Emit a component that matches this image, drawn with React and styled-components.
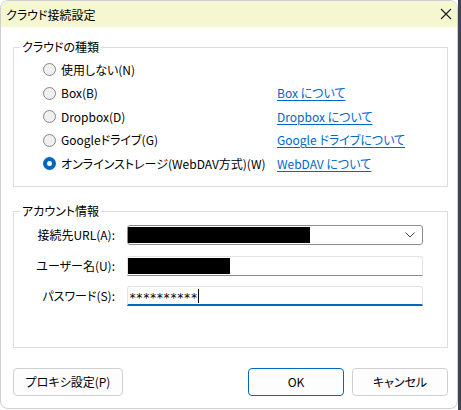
import React from 'react';
import styled, { createGlobalStyle } from 'styled-components';

const Global = createGlobalStyle`
   html, body {
      margin: 0;
      padding: 0;
   }
   body {
      background: linear-gradient(to right, #ffffff 458px, #3b4553 458px);
      font-family: "Noto Sans CJK JP", "Noto Sans", sans-serif;
      font-size: 12px;
      font-feature-settings: "palt";
      color: #000;
   }
`;

const radios = [
   { label: '使用しない(N)' },
   { label: 'Box(B)', link: 'Box について' },
   { label: 'Dropbox(D)', link: 'Dropbox について' },
   { label: 'Googleドライブ(G)', link: 'Google ドライブについて' },
   { label: 'オンラインストレージ(WebDAV方式)(W)', link: 'WebDAV について', checked: true },
];

function App() {
   return (
      <>
         <Global />
         <Window>
            <TitleBar>
               <Title>クラウド接続設定</Title>
               <CloseIcon width="12" height="12" viewBox="0 0 12 12">
                  <path d="M1 1 L11 11 M11 1 L1 11" stroke="#1a1a1a" strokeWidth="1.1" fill="none" />
               </CloseIcon>
            </TitleBar>

            <Body>
               <Group>
                  <Legend>クラウドの種類</Legend>
                  <RadioList>
                     {radios.map((r) => (
                        <RadioRow key={r.label}>
                           <RadioLabel>
                              <RadioDot checked={r.checked} />
                              <span>{r.label}</span>
                           </RadioLabel>
                           {r.link ? <Link href="#">{r.link}</Link> : <span />}
                        </RadioRow>
                     ))}
                  </RadioList>
               </Group>

               <Group $account>
                  <Legend>アカウント情報</Legend>
                  <Fields>
                     <FieldLabel>接続先URL(A):</FieldLabel>
                     <Combo>
                        <Redact $w={182} />
                        <Chevron width="10" height="6" viewBox="0 0 10 6">
                           <path d="M0.5 0.5 L5 5 L9.5 0.5" stroke="#444" strokeWidth="1" fill="none" />
                        </Chevron>
                     </Combo>

                     <FieldLabel>ユーザー名(U):</FieldLabel>
                     <TextBox>
                        <Redact $w={102} />
                     </TextBox>

                     <FieldLabel>パスワード(S):</FieldLabel>
                     <TextBox $focused>
                        <Masked>**********</Masked>
                        <Caret />
                     </TextBox>
                  </Fields>
               </Group>

               <ButtonBar>
                  <Button $wide>プロキシ設定(P)</Button>
                  <Spacer />
                  <Button $primary>OK</Button>
                  <Button>キャンセル</Button>
               </ButtonBar>
            </Body>
         </Window>
      </>
   );
}

export default App;

const Window = styled.div`
   width: 458px;
   height: 409px;
   box-sizing: border-box;
   background: #fff;
   border: 1px solid #cfcfcf;
   border-radius: 8px;
   overflow: hidden;
   display: flex;
   flex-direction: column;
`;

const TitleBar = styled.div`
   height: 26px;
   flex: none;
   background: #f5f7d0;
   display: flex;
   align-items: center;
   justify-content: space-between;
   padding: 0 5px 0 5px;
`;

const Title = styled.div`
   font-size: 12px;
   line-height: 14px;
   margin-top: 1px;
`;

const CloseIcon = styled.svg`
   display: block;
`;

const Body = styled.div`
   flex: 1;
   display: flex;
   flex-direction: column;
   padding: 0 9px 0 12px;
`;

const Group = styled.fieldset`
   margin: ${(p) => (p.$account ? '17px' : '13px')} 0 0 0;
   padding: 0;
   border: 1px solid #dcdcdc;
   min-width: 0;
   height: ${(p) => (p.$account ? '144px' : '147px')};
   box-sizing: border-box;
`;

const Legend = styled.legend`
   margin-left: 6px;
   padding: 0 2px;
   line-height: 14px;
   font-size: 12px;
`;

const RadioList = styled.div`
   padding: 4px 0 0 29px;
   display: flex;
   flex-direction: column;
`;

const RadioRow = styled.div`
   height: 23.5px;
   display: grid;
   grid-template-columns: 234px auto;
   align-items: center;
`;

const RadioLabel = styled.label`
   display: flex;
   align-items: center;
   gap: 5px;
   line-height: 14px;
   white-space: nowrap;
`;

const RadioDot = styled.span`
   width: 13px;
   height: 13px;
   box-sizing: border-box;
   border-radius: 50%;
   flex: none;
   background: ${(p) => (p.checked ? '#ffffff' : '#f0f0f0')};
   border: ${(p) => (p.checked ? '4px solid #0067c0' : '1px solid #858585')};
`;

const Link = styled.a`
   color: #0066cc;
   text-decoration: underline;
   text-underline-offset: 2px;
   line-height: 14px;
   white-space: nowrap;
`;

const Fields = styled.div`
   display: grid;
   grid-template-columns: 101px 296px;
   column-gap: 12px;
   row-gap: 10.5px;
   align-items: center;
   padding-top: 7px;
`;

const FieldLabel = styled.div`
   text-align: right;
   line-height: 14px;
   white-space: nowrap;
`;

const Combo = styled.div`
   height: 20px;
   box-sizing: border-box;
   border: 1px solid #8c8c8c;
   border-radius: 3px;
   display: flex;
   align-items: center;
   justify-content: space-between;
   padding: 0 7px 0 0;
`;

const Chevron = styled.svg`
   display: block;
`;

const TextBox = styled.div`
   height: 20px;
   box-sizing: border-box;
   border: 1px solid #e3e3e3;
   border-bottom: ${(p) => (p.$focused ? '2px solid #0067c0' : '1px solid #8a8a8a')};
   border-radius: 3px 3px 0 0;
   display: flex;
   align-items: center;
   padding-left: ${(p) => (p.$focused ? '1px' : '0')};
`;

const Redact = styled.span`
   display: block;
   background: #000;
   height: 16px;
   width: ${(p) => p.$w}px;
`;

const Masked = styled.span`
   font-family: "DejaVu Sans Mono", monospace;
   font-size: 12px;
   letter-spacing: -0.4px;
   line-height: 14px;
   padding-top: 4px;
`;

const Caret = styled.span`
   width: 1px;
   height: 14px;
   background: #000;
   margin-left: 1px;
`;

const ButtonBar = styled.div`
   display: flex;
   gap: 8px;
   margin-top: 20px;
`;

const Spacer = styled.div`
   flex: 1;
`;

const Button = styled.button`
   height: 28px;
   width: ${(p) => (p.$wide ? '110px' : '96px')};
   font-family: "Noto Sans CJK JP", "Noto Sans", sans-serif;
   font-size: 12px;
   font-feature-settings: "palt";
   line-height: 14px;
   color: #000;
   background: #fdfdfd;
   border: 1px solid ${(p) => (p.$primary ? '#0067c0' : '#d0d0d0')};
   border-radius: 4px;
   padding: 0;
`;
